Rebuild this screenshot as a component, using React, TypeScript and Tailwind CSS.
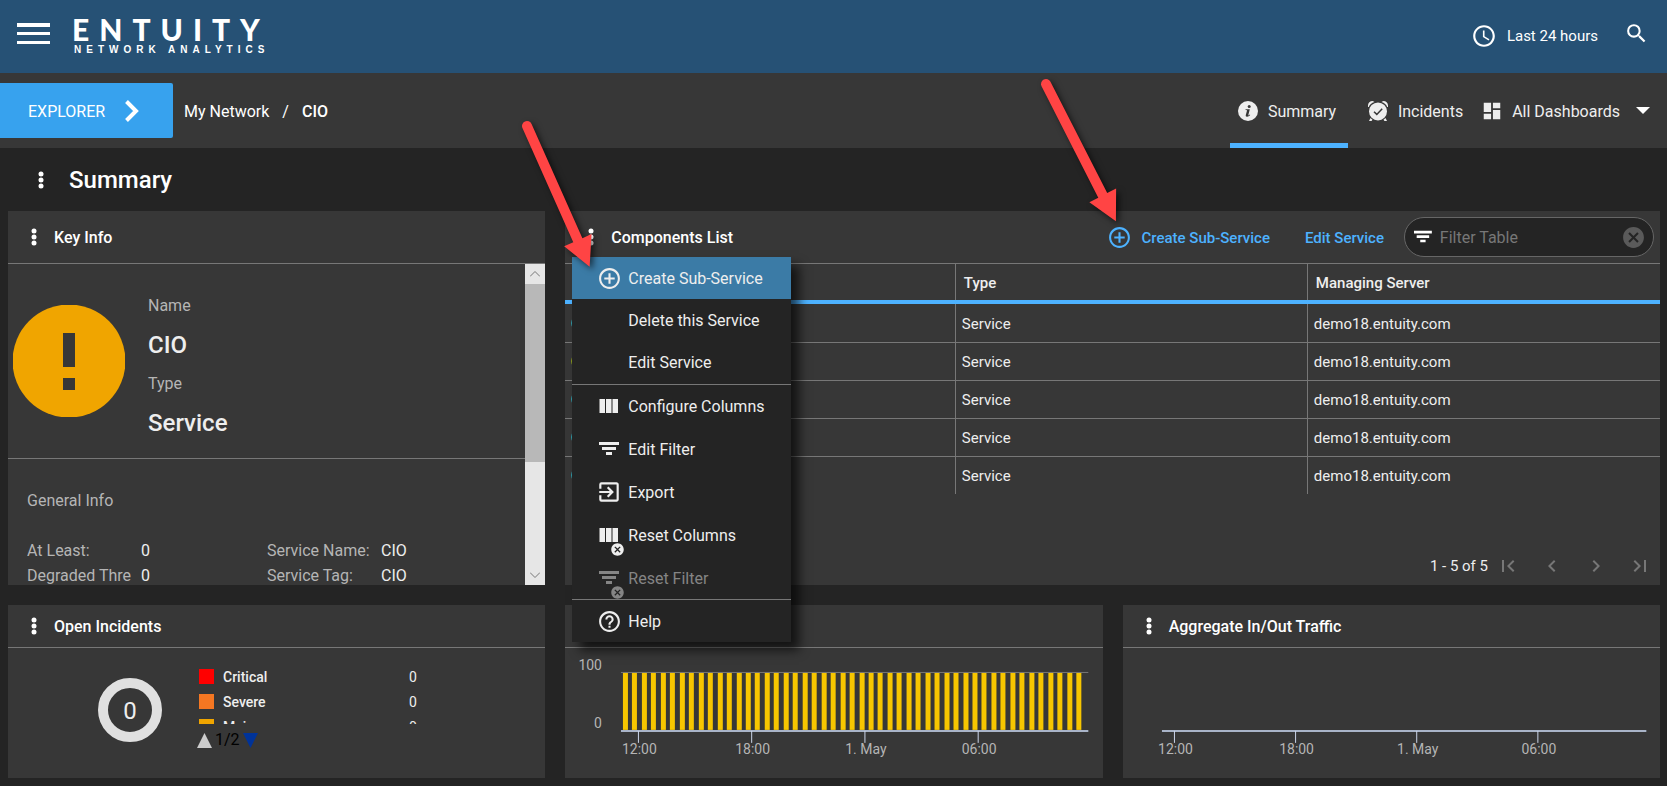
import React, { ReactNode, useState } from "react";
import {
  MdAccessTime,
  MdAddCircleOutline,
  MdCancel,
  MdChevronLeft,
  MdChevronRight,
  MdDashboard,
  MdExitToApp,
  MdFirstPage,
  MdHelpOutline,
  MdLastPage,
  MdSearch
} from "react-icons/md";

const rows = [
  { type: "Service", server: "demo18.entuity.com", color: "#2f9aa8" },
  { type: "Service", server: "demo18.entuity.com", color: "#8a9a1e" },
  { type: "Service", server: "demo18.entuity.com", color: "#2f9aa8" },
  { type: "Service", server: "demo18.entuity.com", color: "#2f9aa8" },
  { type: "Service", server: "demo18.entuity.com", color: "#2f9aa8" }
];

const severities = [
  { label: "Critical", count: 0, swatch: "bg-[#ff0000]" },
  { label: "Severe", count: 0, swatch: "bg-[#f57722]" },
  { label: "Major", count: 0, swatch: "bg-[#f0a500]" }
];

const timeLabels = ["12:00", "18:00", "1. May", "06:00"];

function Dots() {
  return (
    <svg width="6" height="18" viewBox="0 0 6 18" fill="#fff" aria-hidden="true">
      <circle cx="3" cy="3" r="2.5" />
      <circle cx="3" cy="9" r="2.5" />
      <circle cx="3" cy="15" r="2.5" />
    </svg>
  );
}

function ColumnsIcon() {
  return (
    <svg width="20" height="16" viewBox="0 0 20 16" fill="currentColor" aria-hidden="true">
      <path d="M.5 1H6v14H.5zM7 1h5.500v14H7zM13.500 1H19v14h-5.500z" />
    </svg>
  );
}

function FilterIcon() {
  return (
    <svg width="20" height="14" viewBox="0 0 20 14" fill="currentColor" aria-hidden="true">
      <path d="M0 0h20v3H0zM3 5h14v3H3zM7 10h6v3H7z" />
    </svg>
  );
}

function InfoIcon() {
  return (
    <svg width="20" height="20" viewBox="0 0 20 20" aria-hidden="true">
      <circle cx="10" cy="10" r="10" fill="#eee" />
      <circle cx="11.2" cy="5.4" r="1.5" fill="#373737" />
      <path d="M7.6 8.2h4.2l-1.6 6.2c.5.1 1.2-.3 1.7-.8l.3.5c-1 1.2-2.2 1.7-3.3 1.6-1-.1-1.4-.8-1.1-1.8l1.3-4.7-1.6-.2z" fill="#373737" />
    </svg>
  );
}

function AlarmIcon() {
  return (
    <svg width="20" height="20" viewBox="0 0 20 20" aria-hidden="true">
      <g fill="#eee">
        <circle cx="10" cy="10.4" r="9" />
        <path d="M0 6C-.3 2.400 1.200 0 4.800 0L6.500 1C3.500 2 1.700 3.600.8 6zM20 6C20.300 2.400 18.800 0 15.200 0L13.500 1c3 1 4.800 2.600 5.700 5z" />
        <path d="M1 20l1.500-3 2 1.800L3.500 20zM19 20l-1.500-3-2 1.800 1 1.200z" />
      </g>
      <path d="M6 10.800l2.800 2.600 5.400-5.600" fill="none" stroke="#373737" strokeWidth="1.500" />
    </svg>
  );
}

// Callout arrow, starts at its top left corner and points down and right
function Arrow({ angle, className }: { angle: number; className: string }) {
  return (
    <svg
      width="10"
      height="10"
      className={`absolute z-30 overflow-visible pointer-events-none drop-shadow-[3px_3px_3px_rgba(0,0,0,0.6)] ${className}`}
      aria-hidden="true"
    >
      <g transform={`rotate(${angle})`} fill="#ff4444">
        <path d="M-5 0a5 5 0 0 1 10 0L5 125h10L0 154-15 125h10z" />
      </g>
    </svg>
  );
}

interface PanelProps {
  title?: string;
  tall?: boolean;
  className?: string;
  actions?: ReactNode;
  overlay?: ReactNode;
  children: ReactNode;
}

function Panel({ title, tall, className = "", actions, overlay, children }: PanelProps) {
  return (
    <section className={`flex flex-col min-w-0 bg-[#373737] ${className}`}>
      <header
        className={`flex items-center shrink-0 border-b border-[#777] pl-[23px] pr-[6px] ${tall ? "h-[53px]" : "h-[43px]"}`}
      >
        <div className="relative flex">
          <button aria-label="Panel menu" className="flex">
            <Dots />
          </button>
          {overlay}
        </div>
        {title && (
          <h2 className="ml-[17px] pt-px grow text-base font-medium text-white whitespace-nowrap">{title}</h2>
        )}
        {actions}
      </header>
      {children}
    </section>
  );
}

function MenuItem({
  icon,
  label,
  active,
  disabled,
  reset
}: {
  icon?: ReactNode;
  label: string;
  active?: boolean;
  disabled?: boolean;
  reset?: boolean;
}) {
  return (
    <button
      role="menuitem"
      disabled={disabled}
      className={`flex items-center w-full h-[42px] pl-[26px] gap-2 text-base text-left whitespace-nowrap ${
        active ? "bg-[#3b7ba6]" : ""
      } ${disabled ? "text-[#858585]" : "text-[#eee]"}`}
    >
      <span className="relative flex items-center justify-center w-[22px] h-6 shrink-0">
        {icon}
        {reset && <MdCancel size={15} className="absolute -right-[5px] -bottom-[10px]" />}
      </span>
      <span className="pt-[2px]">{label}</span>
    </button>
  );
}

function ServiceMenu() {
  return (
    <div
      role="menu"
      className="absolute z-20 top-[29px] -left-4 w-[219px] bg-[#242424] shadow-[8px_8px_10px_rgba(0,0,0,0.65)]"
    >
      <MenuItem icon={<MdAddCircleOutline size={25} className="shrink-0" />} label="Create Sub-Service" active />
      <MenuItem label="Delete this Service" />
      <MenuItem label="Edit Service" />
      <div className="flex flex-col gap-px mt-px border-y border-[#777]">
        <MenuItem icon={<ColumnsIcon />} label="Configure Columns" />
        <MenuItem icon={<FilterIcon />} label="Edit Filter" />
        <MenuItem icon={<MdExitToApp size={26} className="shrink-0" />} label="Export" />
        <MenuItem icon={<ColumnsIcon />} label="Reset Columns" reset />
        <MenuItem icon={<FilterIcon />} label="Reset Filter" reset disabled />
      </div>
      <MenuItem icon={<MdHelpOutline size={25} className="shrink-0" />} label="Help" />
    </div>
  );
}

function TopBar() {
  return (
    <header className="flex items-center h-[73px] bg-[#265175] text-white">
      <button aria-label="Main menu" className="ml-[17px] mb-[6px]">
        <svg width="33" height="22" viewBox="0 0 33 22" fill="#fff" aria-hidden="true">
          <path d="M0 0h33v4H0zM0 9h33v3H0zM0 18h33v3H0z" />
        </svg>
      </button>
      <div className="flex flex-col ml-[22px] mb-px">
        <span className="font-[Lato] text-[30px] leading-[28px] font-black tracking-[10px]">ENTUITY</span>
        <span className="pl-[2px] font-['Liberation_Sans'] text-[10px] leading-[14px] font-bold tracking-[5px]">
          NETWORK ANALYTICS
        </span>
      </div>
      <div className="flex items-center ml-auto mr-[18px]">
        <button className="flex items-center gap-[10px] text-[15px]">
          <MdAccessTime size={26} className="mb-[2px]" />
          Last 24 hours
        </button>
        <button aria-label="Search" className="ml-[26px] mb-[6px]">
          <MdSearch size={25} />
        </button>
      </div>
    </header>
  );
}

function NavBar() {
  return (
    <nav className="flex items-center h-[75px] bg-[#373737] text-base text-[#eee]">
      <button className="flex items-center justify-between w-[173px] h-[55px] pl-7 pr-[34px] rounded-r-xs bg-[#37a2ee] text-white">
        <span className="pt-[2px]">EXPLORER</span>
        <svg width="14" height="22" viewBox="0 0 14 22" fill="none" stroke="#fff" strokeWidth="4" aria-hidden="true">
          <path d="M1.500 1.500L11 11l-9.500 9.500" />
        </svg>
      </button>
      <div className="flex gap-[13px] ml-[11px] pt-[2px] text-white">
        <a href="#network">My Network</a>
        <span>/</span>
        <a href="#cio" className="font-medium">CIO</a>
      </div>
      <div className="flex h-full ml-auto">
        <a href="#summary" className="flex items-center gap-[10px] px-2 pt-[5px] w-[118px] border-b-5 border-[#4db2ff]">
          <InfoIcon />
          <span className="pt-[2px]">Summary</span>
        </a>
        <a href="#incidents" className="flex items-center gap-[10px] ml-5">
          <AlarmIcon />
          <span className="pt-[2px]">Incidents</span>
        </a>
        <button className="flex items-center ml-[18px] mr-[17px]">
          <MdDashboard size={22} />
          <span className="ml-[9px] pt-[2px]">All Dashboards</span>
          <svg width="14" height="8" viewBox="0 0 14 8" fill="#fff" className="ml-4" aria-hidden="true">
            <path d="M0 0h14L7 7z" />
          </svg>
        </button>
      </div>
    </nav>
  );
}

function InfoPair({ label, value }: { label: string; value: string }) {
  return (
    <div className="flex">
      <dt className="w-[106px] mr-2 text-[#b5b5b5] overflow-hidden whitespace-nowrap">{label}</dt>
      <dd className="text-[#eee]">{value}</dd>
    </div>
  );
}

function KeyInfo() {
  return (
    <Panel title="Key Info" tall>
      <div className="flex grow h-[321px] overflow-hidden">
        <div className="grow">
          <div className="flex items-center h-[195px] border-b border-[#777]">
            <svg width="112" height="112" viewBox="0 0 112 112" className="ml-[5px]" aria-hidden="true">
              <circle cx="56" cy="56" r="56.500" fill="#f0a500" />
              <path d="M50 28h12v34H50zM50 73h12v12H50z" fill="#373737" />
            </svg>
            <dl className="ml-[23px] pt-[14px]">
              <dt className="text-base leading-8 text-[#b5b5b5]">Name</dt>
              <dd className="text-2xl leading-[46px] font-medium text-[#eee]">CIO</dd>
              <dt className="text-base leading-8 text-[#b5b5b5]">Type</dt>
              <dd className="text-2xl leading-[46px] font-medium text-[#eee]">Service</dd>
            </dl>
          </div>
          <h3 className="mt-[30px] ml-[19px] text-base text-[#b5b5b5]">General Info</h3>
          <dl className="grid grid-cols-[240px_1fr] mt-[25px] ml-[19px] text-base leading-[25px]">
            <InfoPair label="At Least:" value="0" />
            <InfoPair label="Service Name:" value="CIO" />
            <InfoPair label="Degraded Thre" value="0" />
            <InfoPair label="Service Tag:" value="CIO" />
          </dl>
        </div>
        {/* Scrollbar */}
        <div className="flex flex-col w-5 shrink-0 bg-[#e6e6e6]">
          <div className="flex items-center justify-center h-5">
            <svg width="10" height="6" viewBox="0 0 10 6" fill="none" stroke="#777" aria-hidden="true">
              <path d="M0 5.500l5-5 5 5" />
            </svg>
          </div>
          <div className="h-[178px] bg-[#b8b8b8]" />
          <div className="flex items-center justify-center h-5 mt-auto">
            <svg width="10" height="6" viewBox="0 0 10 6" fill="none" stroke="#777" aria-hidden="true">
              <path d="M0 .5l5 5 5-5" />
            </svg>
          </div>
        </div>
      </div>
    </Panel>
  );
}

function ComponentsList() {
  const [filter, setFilter] = useState("");

  const actions = (
    <div className="flex items-center text-[15px] font-medium text-[#4db2ff] whitespace-nowrap">
      <div className="relative">
        <button className="flex items-center gap-[10px]">
          <MdAddCircleOutline size={25} />
          <span className="pt-[2px]">Create Sub-Service</span>
        </button>
        <Arrow angle={-27} className="-top-[141px] -left-[61px]" />
      </div>
      <button className="ml-[35px] pt-[2px]">Edit Service</button>
      <div className="flex items-center w-[250px] h-10 ml-5 pl-[9px] pr-[7px] rounded-full border border-[#666] bg-[#242424] text-white">
        <FilterIcon />
        <input
          aria-label="Filter Table"
          placeholder="Filter Table"
          value={filter}
          onChange={(e) => setFilter(e.target.value)}
          className="grow min-w-0 ml-2 pt-px text-base font-normal bg-transparent outline-none placeholder:text-[#777]"
        />
        <button aria-label="Clear filter" onClick={() => setFilter("")} className="text-[#5a5a5a]">
          <MdCancel size={25} />
        </button>
      </div>
    </div>
  );

  const overlay = (
    <>
      <ServiceMenu />
      <Arrow angle={-24} className="-top-[102px] -left-[61px]" />
    </>
  );

  return (
    <Panel title="Components List" tall className="col-span-2" actions={actions} overlay={overlay}>
      <table className="w-full table-fixed text-left text-[15px] text-[#eee]">
        <thead>
          <tr className="h-[38px] border-b-4 border-[#4db2ff]">
            <th className="w-[390px]" aria-label="Name" />
            <th className="w-[352px] px-2 pt-[2px] font-medium border-l border-l-[#777]">Type</th>
            <th className="px-2 pt-[2px] font-medium border-l border-l-[#777]">Managing Server</th>
          </tr>
        </thead>
        <tbody>
          {rows.map((row, i) => (
            <tr key={i} className="h-[38px] first:h-10 border-b border-[#777] last:border-b-0">
              <td className="pl-[6px]">
                <svg width="14" height="14" aria-hidden="true">
                  <circle cx="7" cy="7" r="7" fill={row.color} />
                </svg>
              </td>
              <td className="px-[6px] pt-[2px] border-l border-[#777]">{row.type}</td>
              <td className="px-[6px] pt-[2px] border-l border-[#777]">{row.server}</td>
            </tr>
          ))}
        </tbody>
      </table>
      <div className="flex items-center justify-end mt-auto h-[39px] pr-2 text-[15px] text-[#eee]">
        <span className="pt-px">1 - 5 of 5</span>
        <div className="flex gap-5 ml-2 text-[#777]">
          <button aria-label="First page" disabled><MdFirstPage size={24} /></button>
          <button aria-label="Previous page" disabled><MdChevronLeft size={24} /></button>
          <button aria-label="Next page" disabled><MdChevronRight size={24} /></button>
          <button aria-label="Last page" disabled><MdLastPage size={24} /></button>
        </div>
      </div>
    </Panel>
  );
}

function OpenIncidents() {
  return (
    <Panel title="Open Incidents">
      <div className="flex h-[130px] pl-[90px] text-sm text-[#eee]">
        <svg width="64" height="64" viewBox="0 0 64 64" className="mt-[30px]" aria-hidden="true">
          <circle cx="32" cy="32" r="27" fill="none" stroke="#e0e0e0" strokeWidth="10" />
          <text x="32" y="41" textAnchor="middle" fontSize="24" fill="#eee">0</text>
        </svg>
        <div className="ml-[37px] mt-4">
          <ul className="h-[60px] overflow-hidden">
            {severities.map((s) => (
              <li key={s.label} className="flex items-center h-[25px]">
                <span className={`w-[15px] h-[15px] ${s.swatch}`} />
                <span className="w-[186px] ml-[9px] font-medium">{s.label}</span>
                <span>{s.count}</span>
              </li>
            ))}
          </ul>
          <div className="flex items-center gap-[3px] mt-1 -ml-[2px] text-base text-black">
            <button aria-label="Previous">
              <svg width="15" height="15" viewBox="0 0 15 15" fill="#ccc" aria-hidden="true">
                <path d="M0 15L7.500 0 15 15z" />
              </svg>
            </button>
            1/2
            <button aria-label="Next">
              <svg width="15" height="15" viewBox="0 0 15 15" fill="#003399" aria-hidden="true">
                <path d="M0 0h15L7.500 15z" />
              </svg>
            </button>
          </div>
        </div>
      </div>
    </Panel>
  );
}

function TimeAxis({ from, to, first, step }: { from: number; to: number; first: number; step: number }) {
  return (
    <g>
      <path d={`M${from} 83H${to}`} stroke="#a9b4c8" strokeWidth="2" />
      {timeLabels.map((label, i) => (
        <g key={label}>
          <path d={`M${first + i * step} 83v12`} stroke="#ccd6eb" />
          <text x={first + i * step + 1} y="106" textAnchor="middle">
            {label}
          </text>
        </g>
      ))}
    </g>
  );
}

function StatusChart() {
  return (
    <Panel>
      <svg viewBox="0 0 538 130" className="w-full" fontSize="14" fill="#b5b5b5">
        <text x="37" y="22" textAnchor="end">100</text>
        <text x="37" y="80" textAnchor="end">0</text>
        <path d="M56 24.500h468" stroke="#777" />
        {Array.from({ length: 49 }, (_, i) => (
          <rect key={i} x={Math.round(58 + i * 9.46)} y="25" width="5" height="57" fill="#f7c600" />
        ))}
        <TimeAxis from={56} to={524} first={73.5} step={113.4} />
      </svg>
    </Panel>
  );
}

function TrafficChart() {
  return (
    <Panel title="Aggregate In/Out Traffic">
      <svg viewBox="0 0 538 130" className="w-full" fontSize="14" fill="#b5b5b5">
        <TimeAxis from={39} to={524} first={51.5} step={121.3} />
      </svg>
    </Panel>
  );
}

export default function App() {
  return (
    <div className="min-h-screen bg-[#242424] font-[Roboto,sans-serif]">
      <TopBar />
      <NavBar />
      <main>
        <div className="flex items-center h-[63px] pl-[38px]">
          <button aria-label="Dashboard menu">
            <Dots />
          </button>
          <h1 className="ml-[25px] text-2xl font-medium text-white">Summary</h1>
        </div>
        <div className="grid grid-cols-3 gap-5 pl-2 pr-[7px] pb-2">
          <KeyInfo />
          <ComponentsList />
          <OpenIncidents />
          <StatusChart />
          <TrafficChart />
        </div>
      </main>
    </div>
  );
}
